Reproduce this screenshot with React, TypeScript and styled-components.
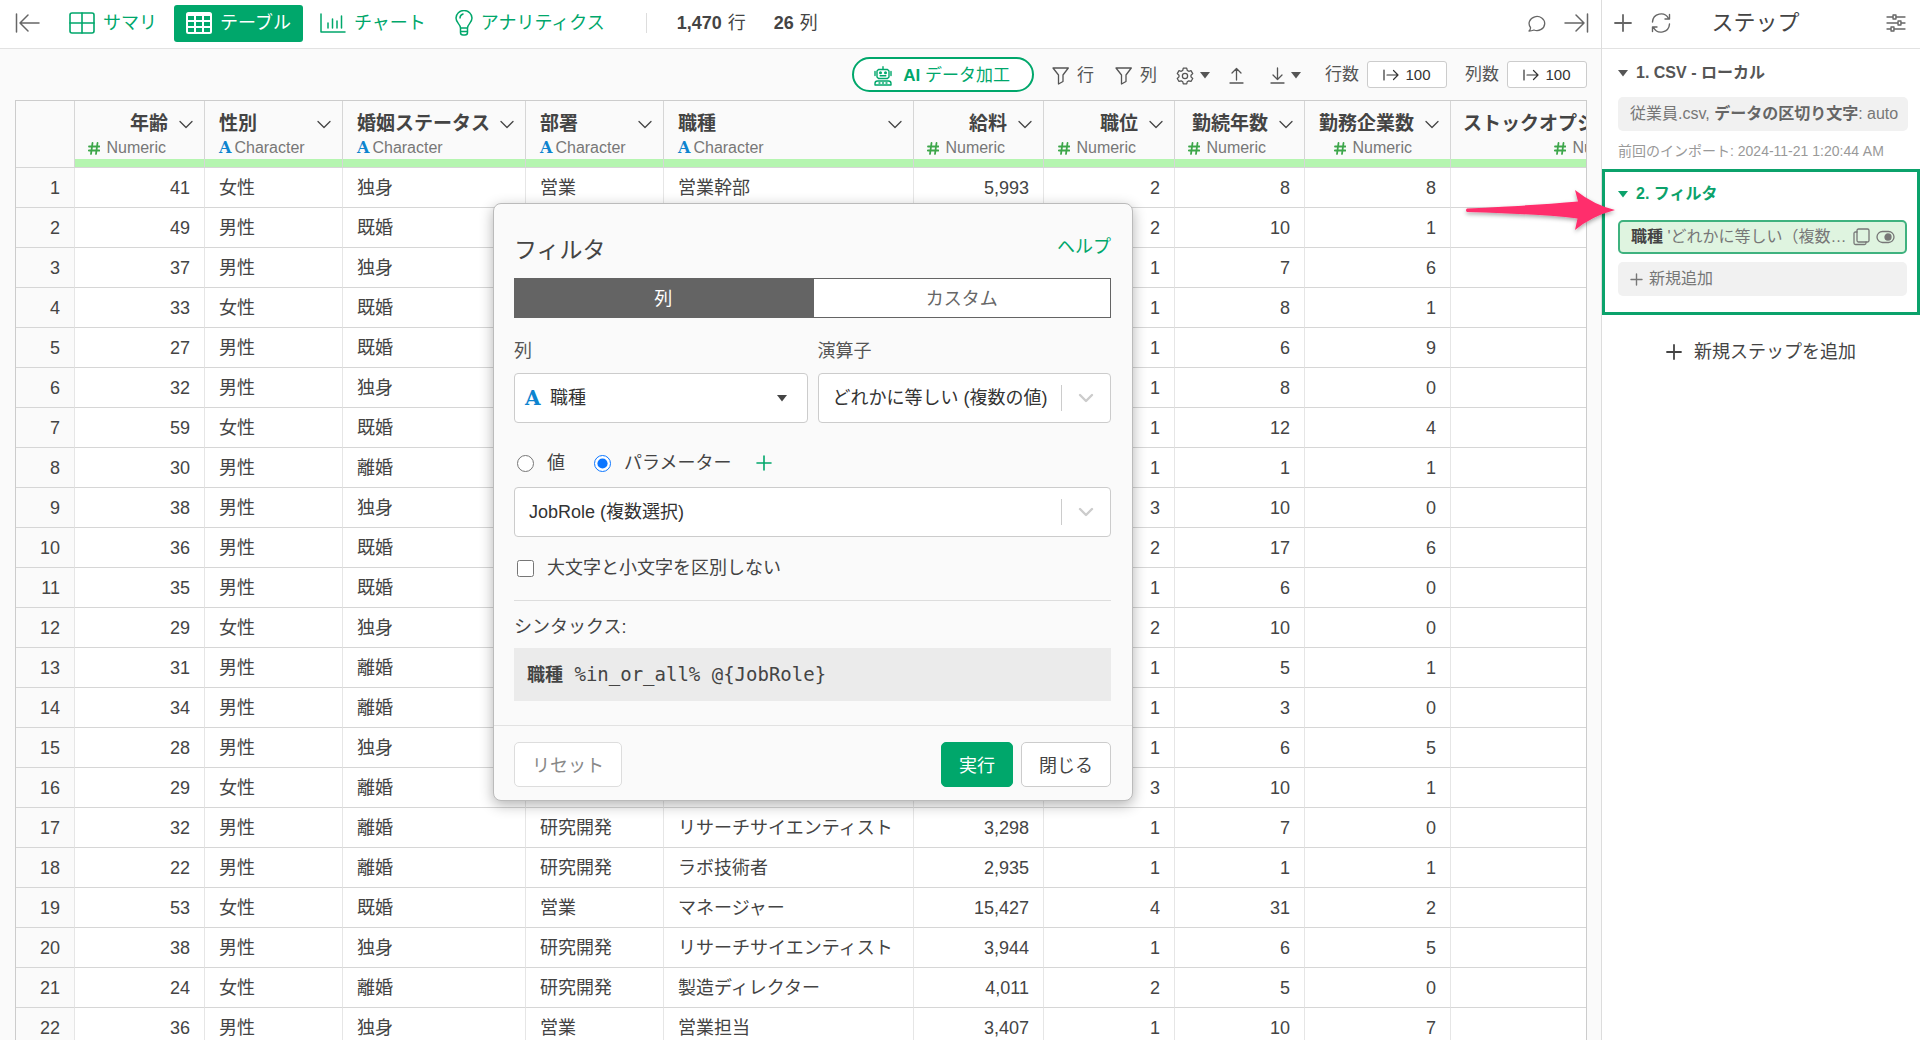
import React from 'react';
import styled, { createGlobalStyle, css } from 'styled-components';

const green = '#00a76b';
const line = '#d6d6d6';
const sans = '"Liberation Sans", "Noto Sans CJK JP", sans-serif';

const GlobalStyle = createGlobalStyle`
  *, *::before, *::after { box-sizing: border-box; }
  body { margin: 0; font-family: ${sans}; font-size: 18px; color: #444; background: #fff; }
  button, input, select { font-family: inherit; color: inherit; }
  button { cursor: pointer; }
  h1, h2, h3, p { margin: 0; font-weight: 400; }
  svg { flex: none; }
`;

const Page = styled.div`
  position: relative;
  display: grid;
  grid-template-columns: minmax(0, 1fr) 319px;
  height: 100vh;
  overflow: hidden;
`;

const Main = styled.main`
  display: flex;
  flex-direction: column;
  min-width: 0;
  min-height: 0;
  background: #fafafa;
`;

const TopBar = styled.header`
  display: flex;
  align-items: center;
  flex: none;
  height: 49px;
  padding: 0 12px 2px 15px;
  background: #fff;
  border-bottom: 1px solid #e2e2e2;
`;

const IconButton = styled.button`
  display: inline-flex;
  align-items: center;
  justify-content: center;
  gap: 6px;
  padding: 0;
  border: 0;
  background: none;
  color: #666;
`;

const Tabs = styled.nav`
  display: flex;
  align-items: center;
  gap: 5px;
  margin-left: 17px;
`;

const Tab = styled.button<{ $active?: boolean }>`
  display: flex;
  align-items: center;
  gap: 8px;
  height: 37px;
  padding: 0 12px;
  border: 0;
  border-radius: 3px;
  font-size: 18px;
  line-height: 36px;
  white-space: nowrap;
  color: ${p => (p.$active ? '#fff' : green)};
  background: ${p => (p.$active ? green : 'transparent')};
`;

const Counts = styled.div`
  display: flex;
  gap: 28px;
  margin-left: 29px;
  padding-left: 30px;
  border-left: 1px solid #ddd;
  line-height: 20px;
  b { color: #444; margin-right: 6px; }
`;

const TopRight = styled.div`
  display: flex;
  align-items: center;
  gap: 18px;
  margin-left: auto;
`;

const Tools = styled.div`
  display: flex;
  align-items: center;
  justify-content: flex-end;
  flex: none;
  height: 51px;
  padding: 0 14px 0 15px;
  font-size: 17px;
`;

const AiButton = styled.button`
  display: flex;
  align-items: center;
  gap: 11px;
  height: 35px;
  padding: 2px 22px 0 20px;
  margin-right: 18px;
  border: 2px solid ${green};
  border-radius: 18px;
  background: #fff;
  font-size: 17px;
  line-height: 30px;
  color: ${green};
`;

const ToolButton = styled(IconButton)<{ $gap: number; $after: number }>`
  gap: ${p => p.$gap}px;
  margin-right: ${p => p.$after}px;
  padding-top: 2px;
  font-size: 17px;
  line-height: 30px;
  color: #555;
`;

const Limit = styled.label`
  display: flex;
  align-items: center;
  gap: 8px;
  margin-left: 18px;
  line-height: 32px;
  color: #555;
`;

const LimitButton = styled.button`
  display: flex;
  align-items: center;
  justify-content: center;
  gap: 6px;
  width: 80px;
  height: 27px;
  padding: 0;
  border: 1px solid #ccc;
  border-radius: 3px;
  background: #fff;
  font-size: 15px;
  color: #333;
`;

const Sheet = styled.div`
  flex: 1;
  min-height: 0;
  margin: 0 14px 0 15px;
  border: 1px solid #ccc;
  border-bottom: 0;
  background: #fff;
  overflow: hidden;
`;

const Table = styled.table`
  table-layout: fixed;
  width: 1655px;
  border-collapse: separate;
  border-spacing: 0;
  font-size: 18px;
`;

const Col = styled.col<{ $w: number }>`
  width: ${p => p.$w}px;
`;

const Corner = styled.th`
  background: #fafafa;
  border-right: 1px solid ${line};
  border-bottom: 1px solid ${line};
`;

const HeadCell = styled.th`
  height: 67px;
  padding: 11px 11px 0 14px;
  vertical-align: top;
  background: #fafafa;
  border-right: 1px solid ${line};
  border-bottom: 1px solid ${line};
  box-shadow: inset 0 -8px #b5f5b0;
`;

const HeadTitle = styled.div<{ $num: boolean }>`
  display: flex;
  align-items: center;
  justify-content: ${p => (p.$num ? 'flex-end' : 'space-between')};
  gap: ${p => (p.$num ? 11 : 8)}px;
  font-size: 19px;
  line-height: 24px;
  white-space: nowrap;
`;

const HeadType = styled.div<{ $num: boolean }>`
  display: flex;
  align-items: center;
  justify-content: ${p => (p.$num ? 'flex-end' : 'flex-start')};
  gap: ${p => (p.$num ? 6 : 3)}px;
  padding-right: ${p => (p.$num ? 27 : 0)}px;
  font-size: 16px;
  font-weight: 400;
  line-height: 24px;
  color: #777;
`;

const RowHead = styled.th`
  height: 40px;
  padding: 0 14px 0 0;
  text-align: right;
  font-weight: 400;
  line-height: 20px;
  background: #fafafa;
  border-right: 1px solid #e6e6e6;
  border-bottom: 1px solid ${line};
`;

const Cell = styled.td<{ $num: boolean }>`
  height: 40px;
  padding: 0 14px;
  line-height: 20px;
  white-space: nowrap;
  text-align: ${p => (p.$num ? 'right' : 'left')};
  border-right: 1px solid #e6e6e6;
  border-bottom: 1px solid ${line};
`;

const Side = styled.aside`
  display: flex;
  flex-direction: column;
  background: #fff;
  border-left: 1px solid #ddd;
`;

const SideBar = styled.div`
  display: flex;
  align-items: center;
  gap: 19px;
  flex: none;
  height: 49px;
  padding: 0 14px 2px 12px;
  border-bottom: 1px solid #e2e2e2;
`;

const SideTitle = styled.h2`
  flex: 1;
  padding-right: 46px;
  text-align: center;
  font-size: 22px;
  line-height: 32px;
`;

const Step = styled.section<{ $selected?: boolean }>`
  display: flex;
  flex-direction: column;
  padding: 12px 12px 0 16px;
  ${p => p.$selected && css`
    padding: 10px 10px 16px 13px;
    border: 3px solid #0ba26b;
  `}
`;

const StepHead = styled.h3<{ $green?: boolean }>`
  display: flex;
  align-items: center;
  gap: 8px;
  padding-bottom: ${p => (p.$green ? 2 : 0)}px;
  font-size: 16px;
  font-weight: 700;
  line-height: 24px;
  color: ${p => (p.$green ? '#0ba26b' : '#555')};
`;

const Chip = styled.button<{ $on?: boolean }>`
  display: flex;
  align-items: center;
  gap: 6px;
  height: 34px;
  margin-top: 12px;
  padding: 0 4px 0 12px;
  border: 0;
  border-radius: 5px;
  background: #f1f1f1;
  font-size: 16px;
  line-height: 24px;
  text-align: left;
  white-space: nowrap;
  color: #777;
  b { color: #666; }
  ${p => p.$on && css`
    padding: 0 10px 0 11px;
    border: 2px solid #3fb27f;
    background: #dff4e0;
    b { color: #444; }
  `}
  & + & { margin-top: 8px; }
`;

const ChipText = styled.span`
  flex: 1;
  min-width: 0;
  overflow: hidden;
  text-overflow: ellipsis;
`;

const Imported = styled.p`
  padding: 8px 0 6px;
  font-size: 14px;
  line-height: 24px;
  color: #999;
`;

const AddStep = styled.button`
  display: flex;
  align-items: center;
  justify-content: center;
  gap: 12px;
  margin-top: 21px;
  padding: 0;
  border: 0;
  background: none;
  font-size: 18px;
  line-height: 32px;
`;

const Arrow = styled.svg`
  position: absolute;
  top: 184px;
  right: 300px;
`;

const Dialog = styled.div`
  position: absolute;
  top: 203px;
  left: 493px;
  width: 640px;
  background: #fafafa;
  border: 1px solid #bbb;
  border-radius: 8px;
  box-shadow: 0 4px 14px rgba(0, 0, 0, 0.3);
`;

const DialogBody = styled.div`
  padding: 24px 21px 24px 20px;
`;

const DialogHead = styled.div`
  display: flex;
  justify-content: space-between;
  height: 50px;
`;

const DialogTitle = styled.h1`
  font-size: 23px;
  line-height: 44px;
`;

const HelpLink = styled.a`
  font-size: 18px;
  line-height: 38px;
  text-decoration: none;
  color: ${green};
`;

const Segments = styled.div`
  display: grid;
  grid-template-columns: 1fr 1fr;
  height: 40px;
`;

const Segment = styled.button<{ $on?: boolean }>`
  padding: 0 0 2px;
  border: 1px solid #646464;
  font-size: 18px;
  color: ${p => (p.$on ? '#fff' : '#666')};
  background: ${p => (p.$on ? '#646464' : '#fff')};
`;

const Fields = styled.div`
  display: grid;
  grid-template-columns: 1fr 1fr;
  gap: 10px;
  margin-top: 17px;
`;

const Field = styled.div`
  display: flex;
  flex-direction: column;
  gap: 6px;
`;

const FieldLabel = styled.label`
  line-height: 32px;
  color: #555;
`;

const SelectBox = styled.div`
  position: relative;
`;

const Select = styled.select<{ $icon?: boolean }>`
  appearance: none;
  display: block;
  width: 100%;
  height: 50px;
  padding: 0 52px 0 ${p => (p.$icon ? 35 : 14)}px;
  border: 1px solid #ccc;
  border-radius: 4px;
  background: #fff;
  font-size: 18px;
  color: #333;
`;

const SelectIcon = styled.span`
  position: absolute;
  top: 0;
  left: 11px;
  display: flex;
  align-items: center;
  height: 50px;
  pointer-events: none;
`;

const SelectArrow = styled.span<{ $divided?: boolean }>`
  position: absolute;
  top: 12px;
  right: 1px;
  display: flex;
  align-items: center;
  justify-content: center;
  width: 49px;
  height: 26px;
  border-left: ${p => (p.$divided ? '1px solid #ccc' : '0')};
  pointer-events: none;
`;

const Radios = styled.div`
  display: flex;
  align-items: center;
  gap: 29px;
  height: 32px;
  margin: 24px 0 8px 3px;
`;

const AddParameter = styled(IconButton)`
  margin-left: -4px;
`;

const Choice = styled.label<{ $gap: number }>`
  display: flex;
  align-items: center;
  gap: ${p => p.$gap}px;
  line-height: 32px;
  input { width: 17px; height: 17px; margin: 0; accent-color: #0a75ff; }
`;

const CheckLine = styled.div`
  margin: 15px 0 16px 3px;
`;

const Syntax = styled.div`
  padding-top: 10px;
  border-top: 1px solid #ddd;
  line-height: 32px;
`;

const Code = styled.pre`
  margin: 5px 0 0;
  padding: 0 13px;
  background: #ebebeb;
  font-family: "DejaVu Sans Mono", "Noto Sans CJK JP", monospace;
  font-size: 19px;
  line-height: 52px;
  b { font-family: ${sans}; font-size: 18px; }
`;

const DialogFoot = styled.div`
  display: flex;
  gap: 8px;
  padding: 16px 21px 13px 20px;
  border-top: 1px solid #e2e2e2;
`;

const Button = styled.button<{ $kind: 'muted' | 'primary' | 'plain' }>`
  height: 45px;
  padding: 0 17px 2px;
  border: 1px solid ${p => (p.$kind === 'primary' ? green : p.$kind === 'muted' ? '#ddd' : '#ccc')};
  border-radius: 5px;
  background: ${p => (p.$kind === 'primary' ? green : '#fff')};
  color: ${p => (p.$kind === 'primary' ? '#fff' : p.$kind === 'muted' ? '#888' : '#444')};
  font-size: 18px;
  ${p => p.$kind === 'muted' && css`margin-right: auto;`}
`;

const Letter = styled.span<{ $large?: boolean }>`
  font-family: "DejaVu Serif", serif;
  font-weight: 700;
  font-size: ${p => (p.$large ? 20 : 16)}px;
  color: #0d84cf;
`;

type IconProps = { w: number; h?: number; sw?: number; box?: string; color?: string; children: React.ReactNode };
const Icon = ({ w, h = w, sw = 1.5, box, color = 'currentColor', children }: IconProps) => (
  <svg width={w} height={h} viewBox={box ?? `0 0 ${w} ${h}`} fill="none" stroke={color} strokeWidth={sw} strokeLinecap="round" strokeLinejoin="round" aria-hidden="true">
    {children}
  </svg>
);

const CollapseLeft = () => <Icon w={25} h={22}><path d="M1.5 2v18M5 11h19M13 3l-8 8 8 8" /></Icon>;
const CollapseRight = () => <Icon w={25} h={22}><path d="M23.5 2v18M20 11H1M12 3l8 8-8 8" /></Icon>;
const SummaryIcon = () => <Icon w={26} h={22} sw={1.6}><rect x="1" y="1" width="24" height="20" rx="2" /><path d="M13 1v20M1 11h24" /></Icon>;
const TableIcon = () => (
  <Icon w={26} h={22} sw={2}><rect x="1" y="1" width="24" height="20" rx="1.5" /><path d="M1 3h24M1 9h24M1 15h24M9 3v18M17 3v18" /></Icon>
);
const ChartIcon = () => <Icon w={26} h={20}><path d="M1 1v18h24M8 15v-5M12.500 15V6M17 15V8M21.500 15V3" /></Icon>;
const BulbIcon = () => (
  <Icon w={18} h={26}>
    <path d="M5.500 18c0-4-4.500-5-4.500-10a8 7.500 0 0 1 16 0c0 5-4.500 6-4.500 10zM5.500 18v4.500q0 2.500 2.500 2.500h2q2.500 0 2.500-2.500V18M5.500 21.500h7M5 8q0-3 3-4" />
  </Icon>
);
const CommentIcon = () => (
  <Icon w={18} h={17} sw={1.3}><path d="M2.500 12.500A7.800 7 0 1 1 6 15Q3.500 16 1 16q1.800-1.500 1.500-3.500z" /></Icon>
);
const RobotIcon = () => (
  <Icon w={18} h={20} sw={1.4}>
    <path d="M9 .8v2.700M4.500 3.500h9l1.500 1.500v6l-1.500 1.500h-9L3 11V5zM1 5.500v4M17 5.500v4M6.200 9.800h5.600" />
    <path d="M1 19v-1.500Q1 15 3.500 15h11q2.500 0 2.500 2.500V19zM5 17h1M8.500 17h1M12 17h1" />
    <circle cx="6.500" cy="6.800" r=".8" /><circle cx="11.500" cy="6.800" r=".8" />
  </Icon>
);
const FunnelIcon = () => <Icon w={17} h={18} sw={1.3}><path d="M1 1h15.300L11 8v6.500L6.500 17V8z" /></Icon>;
const GearIcon = () => (
  <Icon w={18} box="0 0 24 24" sw={1.7}>
    <path d="M9.700 1.500h4.600l.7 3 2 1.200 3-.9 2.300 4-2.300 2.100v2.300l2.300 2.100-2.300 4-3-.9-2 1.200-.7 3H9.700l-.7-3-2-1.200-3 .9-2.300-4L4 13.200v-2.300L1.700 8.800l2.300-4 3 .9 2-1.200z" />
    <circle cx="12" cy="12" r="3.500" />
  </Icon>
);
const UploadIcon = () => <Icon w={15} h={17} sw={1.3}><path d="M1 16h13M7.500 13V1.500M3 6l4.500-4.500L12 6" /></Icon>;
const DownloadIcon = () => <Icon w={15} h={17} sw={1.3}><path d="M1 16h13M7.500 1v11.500M3 8l4.500 4.500L12 8" /></Icon>;
const Caret = () => <svg width="10" height="7" viewBox="0 0 10 7" aria-hidden="true"><path d="M0 0h10L5 6.500z" fill="currentColor" /></svg>;
const ToIcon = () => <Icon w={16} h={12} sw={1.2}><path d="M1 1v10M4 6h11M10.500 1.500L15 6l-4.500 4.500" /></Icon>;
const HeadChevron = () => <Icon w={14} h={9} sw={1.3}><path d="M1 1.500l6 6 6-6" /></Icon>;
const SelectChevron = () => <Icon w={16} h={11} sw={2.4} color="#ccc"><path d="M2 2l6 6 6-6" /></Icon>;
const Plus = ({ s, sw = 1.8 }: { s: number; sw?: number }) => (
  <Icon w={s} sw={sw}><path d={`M${s / 2} 1v${s - 2}M1 ${s / 2}h${s - 2}`} /></Icon>
);
const HashIcon = () => <Icon w={12} h={13} sw={1.8} color="#3da64a"><path d="M4.500 1L3 12M9.500 1L8 12M1 4.500h10.500M.800 8.500h10.500" /></Icon>;
const RefreshIcon = () => (
  <Icon w={20} sw={1.4}><path d="M1.500 9A8.500 8.500 0 0 1 17.500 5.500M18.500 1.500v4.500H14M18.500 11A8.500 8.500 0 0 1 2.500 14.500M1.500 18.500V14H6" /></Icon>
);
const SlidersIcon = () => (
  <Icon w={20} h={18} sw={1.3}>
    <path d="M1 3h6M10 3h9M1 9h11M15 9h4M1 15h4M8 15h11" />
    <rect x="7" y="1" width="3" height="4" /><rect x="12" y="7" width="3" height="4" /><rect x="5" y="13" width="3" height="4" />
  </Icon>
);
const CopyIcon = () => <Icon w={17} h={18} sw={1.3}><rect x="4" y="1" width="12" height="13" rx="1.500" /><path d="M4 4H2.500Q1 4 1 5.500v9.500q0 1.500 1.500 1.500h9q1.500 0 1.500-1.500v-1" /></Icon>;
const ToggleIcon = () => <Icon w={19} h={14} sw={1.3}><rect x="1" y="1.500" width="17" height="11" rx="5.500" /><circle cx="12" cy="7" r="3" fill="currentColor" /></Icon>;

const columns: { name: string; num: boolean; w: number }[] = [
  { name: '年齢', num: true, w: 130 },
  { name: '性別', num: false, w: 138 },
  { name: '婚姻ステータス', num: false, w: 183 },
  { name: '部署', num: false, w: 138 },
  { name: '職種', num: false, w: 250 },
  { name: '給料', num: true, w: 130 },
  { name: '職位', num: true, w: 131 },
  { name: '勤続年数', num: true, w: 130 },
  { name: '勤務企業数', num: true, w: 146 },
  { name: 'ストックオプション', num: true, w: 220 },
];

const rows: string[][] = [
  ['41', '女性', '独身', '営業', '営業幹部', '5,993', '2', '8', '8'],
  ['49', '男性', '既婚', '', '', '', '2', '10', '1'],
  ['37', '男性', '独身', '', '', '', '1', '7', '6'],
  ['33', '女性', '既婚', '', '', '', '1', '8', '1'],
  ['27', '男性', '既婚', '', '', '', '1', '6', '9'],
  ['32', '男性', '独身', '', '', '', '1', '8', '0'],
  ['59', '女性', '既婚', '', '', '', '1', '12', '4'],
  ['30', '男性', '離婚', '', '', '', '1', '1', '1'],
  ['38', '男性', '独身', '', '', '', '3', '10', '0'],
  ['36', '男性', '既婚', '', '', '', '2', '17', '6'],
  ['35', '男性', '既婚', '', '', '', '1', '6', '0'],
  ['29', '女性', '独身', '', '', '', '2', '10', '0'],
  ['31', '男性', '離婚', '', '', '', '1', '5', '1'],
  ['34', '男性', '離婚', '', '', '', '1', '3', '0'],
  ['28', '男性', '独身', '', '', '', '1', '6', '5'],
  ['29', '女性', '離婚', '', '', '', '3', '10', '1'],
  ['32', '男性', '離婚', '研究開発', 'リサーチサイエンティスト', '3,298', '1', '7', '0'],
  ['22', '男性', '離婚', '研究開発', 'ラボ技術者', '2,935', '1', '1', '1'],
  ['53', '女性', '既婚', '営業', 'マネージャー', '15,427', '4', '31', '2'],
  ['38', '男性', '独身', '研究開発', 'リサーチサイエンティスト', '3,944', '1', '6', '5'],
  ['24', '女性', '離婚', '研究開発', '製造ディレクター', '4,011', '2', '5', '0'],
  ['36', '男性', '独身', '営業', '営業担当', '3,407', '1', '10', '7'],
];

const DataTable = () => (
  <Sheet>
    <Table>
      <colgroup>
        <Col $w={59} />
        {columns.map(c => <Col key={c.name} $w={c.w} />)}
      </colgroup>
      <thead>
        <tr>
          <Corner />
          {columns.map(c => (
            <HeadCell key={c.name} scope="col">
              <HeadTitle $num={c.num}>{c.name}<HeadChevron /></HeadTitle>
              <HeadType $num={c.num}>
                {c.num ? <HashIcon /> : <Letter aria-hidden="true">A</Letter>}
                {c.num ? 'Numeric' : 'Character'}
              </HeadType>
            </HeadCell>
          ))}
        </tr>
      </thead>
      <tbody>
        {rows.map((row, r) => (
          <tr key={r}>
            <RowHead scope="row">{r + 1}</RowHead>
            {columns.map((c, i) => <Cell key={c.name} $num={c.num}>{row[i]}</Cell>)}
          </tr>
        ))}
      </tbody>
    </Table>
  </Sheet>
);

const FilterDialog = () => (
  <Dialog role="dialog" aria-labelledby="filter-title">
    <DialogBody>
      <DialogHead>
        <DialogTitle id="filter-title">フィルタ</DialogTitle>
        <HelpLink href="#help">ヘルプ</HelpLink>
      </DialogHead>
      <Segments>
        <Segment $on>列</Segment>
        <Segment>カスタム</Segment>
      </Segments>
      <Fields>
        <Field>
          <FieldLabel htmlFor="column">列</FieldLabel>
          <SelectBox>
            <Select id="column" $icon><option>職種</option></Select>
            <SelectIcon><Letter $large aria-hidden="true">A</Letter></SelectIcon>
            <SelectArrow><Caret /></SelectArrow>
          </SelectBox>
        </Field>
        <Field>
          <FieldLabel htmlFor="operator">演算子</FieldLabel>
          <SelectBox>
            <Select id="operator"><option>どれかに等しい (複数の値)</option></Select>
            <SelectArrow $divided><SelectChevron /></SelectArrow>
          </SelectBox>
        </Field>
      </Fields>
      <Radios>
        <Choice $gap={13}><input type="radio" name="source" />値</Choice>
        <Choice $gap={13}><input type="radio" name="source" defaultChecked />パラメーター</Choice>
        <AddParameter aria-label="パラメーターを追加"><Icon w={16} color={green} sw={1.6}><path d="M8 1v14M1 8h14" /></Icon></AddParameter>
      </Radios>
      <SelectBox>
        <Select aria-label="パラメーター"><option>JobRole (複数選択)</option></Select>
        <SelectArrow $divided><SelectChevron /></SelectArrow>
      </SelectBox>
      <CheckLine>
        <Choice $gap={13}><input type="checkbox" />大文字と小文字を区別しない</Choice>
      </CheckLine>
      <Syntax>
        シンタックス:
        <Code><b>職種</b> %in_or_all% @{'{JobRole}'}</Code>
      </Syntax>
    </DialogBody>
    <DialogFoot>
      <Button $kind="muted">リセット</Button>
      <Button $kind="primary">実行</Button>
      <Button $kind="plain">閉じる</Button>
    </DialogFoot>
  </Dialog>
);

const App = () => (
  <Page lang="ja">
    <GlobalStyle />
    <Main>
      <TopBar>
        <IconButton><CollapseLeft /></IconButton>
        <Tabs>
          <Tab><SummaryIcon />サマリ</Tab>
          <Tab $active><TableIcon />テーブル</Tab>
          <Tab><ChartIcon />チャート</Tab>
          <Tab><BulbIcon />アナリティクス</Tab>
        </Tabs>
        <Counts>
          <span><b>1,470</b>行</span>
          <span><b>26</b>列</span>
        </Counts>
        <TopRight>
          <IconButton><CommentIcon /></IconButton>
          <IconButton><CollapseRight /></IconButton>
        </TopRight>
      </TopBar>
      <Tools>
        <AiButton><RobotIcon /><span><b>AI</b> データ加工</span></AiButton>
        <ToolButton $gap={8} $after={21}><FunnelIcon />行</ToolButton>
        <ToolButton $gap={8} $after={19}><FunnelIcon />列</ToolButton>
        <ToolButton $gap={6} $after={19}><GearIcon /><Caret /></ToolButton>
        <ToolButton $gap={6} $after={26}><UploadIcon /></ToolButton>
        <ToolButton $gap={6} $after={6}><DownloadIcon /><Caret /></ToolButton>
        <Limit>行数<LimitButton><ToIcon />100</LimitButton></Limit>
        <Limit>列数<LimitButton><ToIcon />100</LimitButton></Limit>
      </Tools>
      <DataTable />
    </Main>
    <Side>
      <SideBar>
        <IconButton><Plus s={18} /></IconButton>
        <IconButton><RefreshIcon /></IconButton>
        <SideTitle>ステップ</SideTitle>
        <IconButton><SlidersIcon /></IconButton>
      </SideBar>
      <Step>
        <StepHead><Caret />1. CSV - ローカル</StepHead>
        <Chip><ChipText>従業員.csv, <b>データの区切り文字</b>: auto</ChipText></Chip>
        <Imported>前回のインポート: 2024-11-21 1:20:44 AM</Imported>
      </Step>
      <Step $selected>
        <StepHead $green><Caret />2. フィルタ</StepHead>
        <Chip $on>
          <ChipText><b>職種</b> 'どれかに等しい（複数の値）'</ChipText>
          <CopyIcon />
          <ToggleIcon />
        </Chip>
        <Chip><Plus s={13} sw={1.4} />新規追加</Chip>
      </Step>
      <AddStep><Plus s={16} />新規ステップを追加</AddStep>
    </Side>
    <FilterDialog />
    <Arrow width="160" height="56" viewBox="0 0 160 56" aria-hidden="true">
      <defs>
        <filter id="arrow-shadow" x="-10%" y="-20%" width="120%" height="160%">
          <feDropShadow dx="0" dy="2" stdDeviation="2" floodOpacity="0.35" />
        </filter>
      </defs>
      <path d="M7 24.500Q80 21 118 17.500L115 6Q134 21 155 26Q132 32 115 46L117.500 34.500Q80 30 7 28Q5 26 7 24.500z" fill="#ff2e6c" filter="url(#arrow-shadow)" />
    </Arrow>
  </Page>
);

export default App;
